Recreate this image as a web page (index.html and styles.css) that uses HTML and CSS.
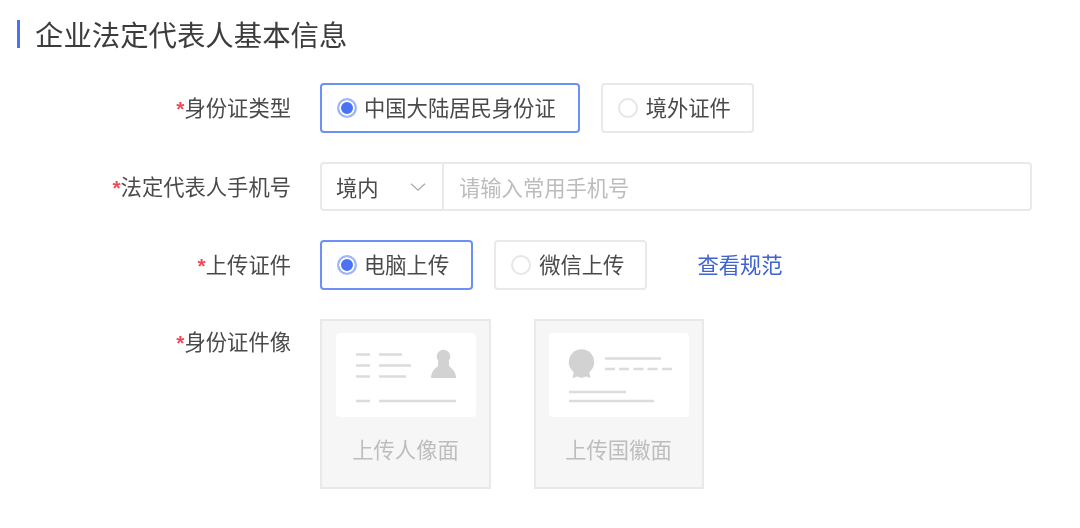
FILE: index.html
```html
<!DOCTYPE html>
<html lang="en">
<head>
  <meta charset="UTF-8">
  <title>企业法定代表人基本信息</title>
  <link rel="stylesheet" href="styles.css">
</head>
<body>
<div class="page">
  <h2 class="title">企业法定代表人基本信息</h2>

  <div class="row">
    <div class="label"><span class="star">*</span>身份证类型</div>
    <div class="controls">
      <div class="option active"><span class="radio"></span>中国大陆居民身份证</div>
      <div class="option"><span class="radio"></span>境外证件</div>
    </div>
  </div>

  <div class="row phone-row">
    <div class="label"><span class="star">*</span>法定代表人手机号</div>
    <div class="phone">
      <div class="select">境内
        <svg class="chevron" width="16" height="8" viewBox="0 0 16 8"><path d="M1 .8 8 7.2 15 .8" fill="none" stroke="#a8a8a8" stroke-width="1.2"/></svg>
      </div>
      <div class="placeholder">请输入常用手机号</div>
    </div>
  </div>

  <div class="row">
    <div class="label"><span class="star">*</span>上传证件</div>
    <div class="controls">
      <div class="option active"><span class="radio"></span>电脑上传</div>
      <div class="option"><span class="radio"></span>微信上传</div>
      <a class="link">查看规范</a>
    </div>
  </div>

  <div class="row">
    <div class="label top"><span class="star">*</span>身份证件像</div>
    <div class="uploads">
      <div class="upload">
        <div class="card">
          <svg width="140" height="84" viewBox="0 0 140 84">
            <g stroke="#dcdcdc" stroke-width="2.500">
              <path d="M20 21.500h14M43 21.500h23M20 32.500h14M43 32.500h32M20 43.500h14M43 43.500h27M20 68h14M43 68h77"/>
            </g>
            <circle cx="107.500" cy="23.500" r="6.800" fill="#d2d2d2"/>
            <path d="M95 45c0-1 0-3 1.500-6 1.500-3 4.500-5 5.500-6v-5h11v5c1 1 4 3 5.500 6 1.500 3 1.500 5 1.500 6z" fill="#d2d2d2"/>
          </svg>
        </div>
        <div class="upload-text">上传人像面</div>
      </div>
      <div class="upload second">
        <div class="card">
          <svg width="140" height="84" viewBox="0 0 140 84">
            <circle cx="32.500" cy="29" r="12.700" fill="#d2d2d2"/>
            <path d="M25 38l-1.500 7 4.500-1.500 4.500 1.500 4.500-1.500 4.500 1.500-1.500-7z" fill="#d2d2d2"/>
            <g stroke="#dcdcdc" stroke-width="2.500">
              <path d="M56 25.500h56M56 36h10M70 36h10M84.500 36h10M98.500 36h10M113 36h10M20 59h57M20 68h85"/>
            </g>
          </svg>
        </div>
        <div class="upload-text">上传国徽面</div>
      </div>
    </div>
  </div>
</div>
</body>
</html>
```

FILE: styles.css
```css
body {
  margin: 0;
  background: #fff;
  font-family: "Noto Sans CJK SC", "Liberation Sans", sans-serif;
  font-size: 21.3px;
  color: #4a4a4a;
}

.page {
  width: 1080px;
  height: 528px;
  padding: 20px 0 0 17px;
  box-sizing: border-box;
  overflow: hidden;
  filter: blur(0.7px);
}

.title {
  margin: 0 0 35px;
  height: 28px;
  line-height: 27px;
  padding-left: 15px;
  border-left: 3px solid #4a72f5;
  font-size: 28.4px;
  font-weight: 400;
  color: #3c3c3c;
}

.row {
  display: flex;
  margin-bottom: 29px;
}

.phone-row {
  height: 49px;
}

.label {
  width: 274px;
  height: 50px;
  line-height: 47px;
  text-align: right;
  margin-right: 29px;
  flex-shrink: 0;
}

.label.top {
  height: 46px;
  line-height: 44px;
}

.star {
  color: #f5475b;
  font-family: "Liberation Sans", sans-serif;
  font-weight: 700;
  font-size: 21px;
}

.controls {
  display: flex;
  align-items: center;
}

.option {
  display: flex;
  align-items: center;
  height: 50px;
  box-sizing: border-box;
  padding: 0 21px 3px 15px;
  margin-right: 21px;
  border: 2px solid #e9e9e9;
  border-radius: 4px;
}

.option.active {
  padding-right: 22px;
  border-color: #6c90f8;
}

.radio {
  width: 20px;
  height: 20px;
  box-sizing: border-box;
  margin: 3px 8px 0 0;
  border: 2px solid #e6e6e6;
  border-radius: 50%;
}

.option.active .radio {
  margin-right: 7px;
  border-color: #9db5fa;
  background: #4a72f5;
  box-shadow: inset 0 0 0 2px #fff;
}

.link {
  margin: 0 0 3px 29px;
  color: #3f63cf;
}

.phone {
  display: flex;
  width: 712px;
  height: 49px;
  box-sizing: border-box;
  border: 2px solid #e9e9e9;
  border-radius: 4px;
}

.select {
  display: flex;
  align-items: center;
  justify-content: space-between;
  width: 122px;
  box-sizing: border-box;
  padding: 0 16px 0 14px;
  border-right: 2px solid #e9e9e9;
}

.placeholder {
  line-height: 45px;
  padding-left: 15px;
  color: #bcbcbc;
}

.uploads {
  display: flex;
}

.upload {
  width: 171px;
  height: 170px;
  box-sizing: border-box;
  padding: 12px 14px 0;
  margin-right: 43px;
  background: #f6f6f6;
  border: 2px solid #e9e9e9;
}

.upload.second {
  width: 170px;
  padding-left: 13px;
}

.card {
  height: 84px;
  width: 140px;
  background: #fff;
  border-radius: 4px;
}

.card svg {
  display: block;
}

.upload-text {
  margin-top: 17px;
  text-align: center;
  line-height: 30px;
  color: #bdbdbd;
}
```
